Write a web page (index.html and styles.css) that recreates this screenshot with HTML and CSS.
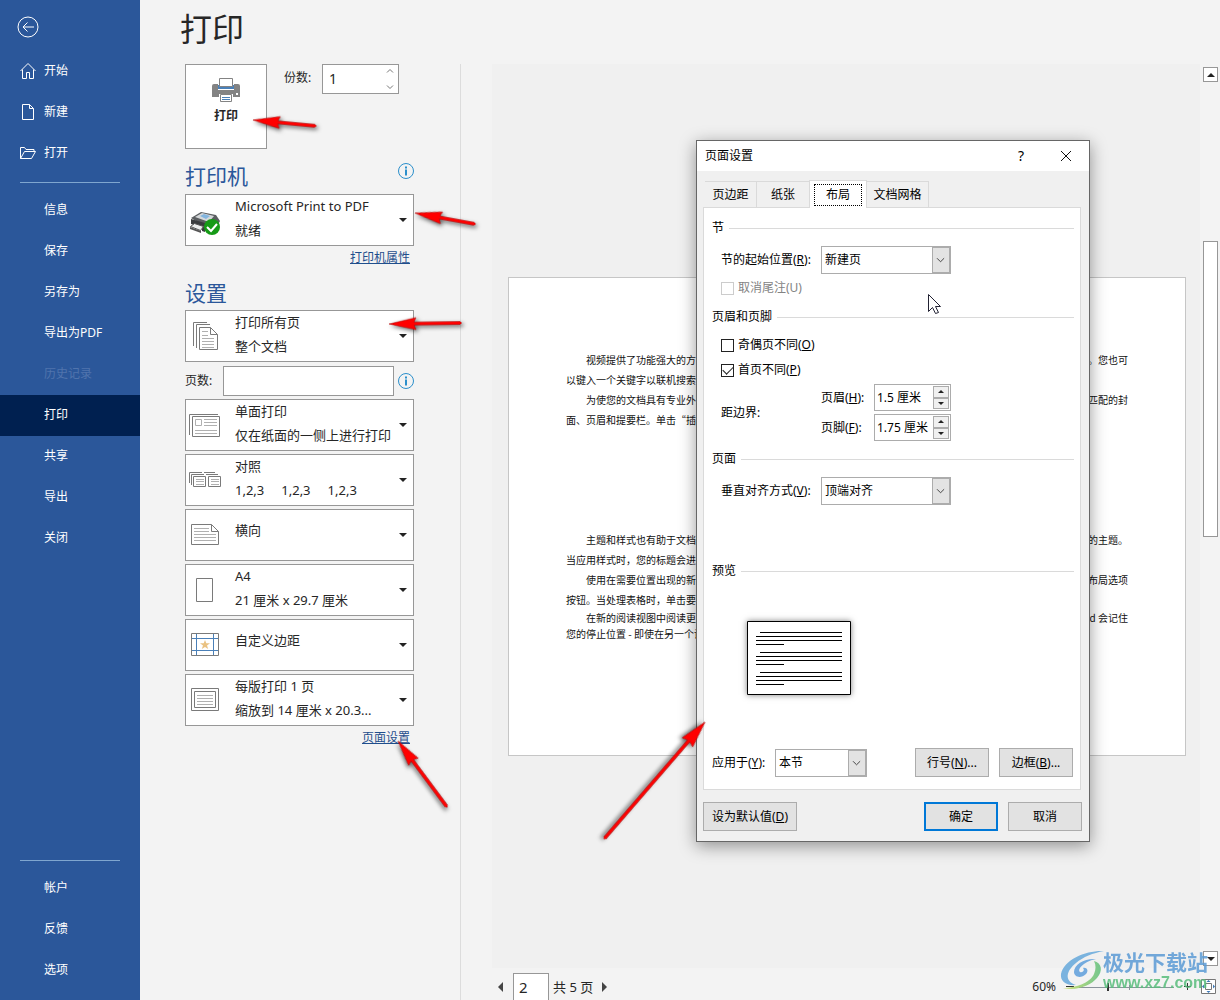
FILE: index.html
```html
<!DOCTYPE html>
<html lang="zh-CN">
<head>
<meta charset="utf-8">
<title>打印</title>
<link rel="stylesheet" href="styles.css">
</head>
<body>
<div class="app">
  <nav class="sidebar">
    <button class="back" aria-label="返回">
      <svg width="22" height="22" viewBox="0 0 22 22"><circle cx="11" cy="11" r="10"/><path d="M17 11H6M10.500 6.500L6 11l4.500 4.500"/></svg>
    </button>
    <a class="nav-item" href="#"><svg width="18" height="18" viewBox="0 0 18 18"><path d="M1.500 9L9 1.500 16.500 9M3.500 7.500v9h4v-6h3v6h4v-9"/></svg>开始</a>
    <a class="nav-item" href="#"><svg width="18" height="18" viewBox="0 0 18 18"><path d="M3.500 1.500h7l4 4v11h-11zM10.500 1.500v4h4"/></svg>新建</a>
    <a class="nav-item" href="#"><svg width="18" height="18" viewBox="0 0 18 18"><path d="M1.500 14.500v-11h4l1.500 2h8v2M1.500 14.500l4-7h11l-4 7z"/></svg>打开</a>
    <hr class="rule">
    <a class="nav-item text" href="#">信息</a>
    <a class="nav-item text" href="#">保存</a>
    <a class="nav-item text" href="#">另存为</a>
    <a class="nav-item text" href="#">导出为PDF</a>
    <a class="nav-item text disabled" aria-disabled="true">历史记录</a>
    <a class="nav-item text active" href="#" aria-current="page">打印</a>
    <a class="nav-item text" href="#">共享</a>
    <a class="nav-item text" href="#">导出</a>
    <a class="nav-item text" href="#">关闭</a>
    <hr class="rule bottom">
    <a class="nav-item text" href="#">帐户</a>
    <a class="nav-item text" href="#">反馈</a>
    <a class="nav-item text" href="#">选项</a>
  </nav>

  <main class="main">
    <h1>打印</h1>
    <div class="columns">
      <section class="settings">
        <div class="print-row">
          <button class="print-button">
            <svg width="28" height="26" viewBox="0 0 28 26"><path fill="#838383" d="M2 7h24q2 0 2 2v11H0V9q0-2 2-2z"/><path fill="#fff" d="M6 6h16v7H6zM7 17h14v9H7z"/><path fill="#4a80b8" d="M6 8h16v4H6z"/><path fill="#fff" stroke="#838383" d="M7.500 1.500h13v8h-13zM8.500 17.500h11v7h-11z"/><path stroke="#4a80b8" d="M10 20.500h8M10 22.500h8"/><path fill="#fff" d="M24 16h2v2h-2z"/></svg>
            <span>打印</span>
          </button>
          <label class="copies-label" for="copies">份数:</label>
          <div class="copies">
            <input id="copies" type="text" value="1">
            <svg width="8" height="22" viewBox="0 0 8 22"><path d="M1 4.500l3-3 3 3M1 17.500l3 3 3-3"/></svg>
          </div>
        </div>

        <div class="heading"><h2>打印机</h2><svg class="info" width="18" height="18" viewBox="0 0 18 18"><circle cx="9" cy="9" r="7.500"/><path d="M9 7.500v6M9 4.500v2"/></svg></div>
        <button class="picker" aria-haspopup="listbox">
          <svg class="icon" width="40" height="50" viewBox="0 0 40 50"><path fill="#5b5e61" d="M5 23l10-6 15 3 4 6-4 8-12-3z"/><path fill="#d5d8da" d="M9 22l7-4 12 3-5 6z"/><path fill="#83b5df" d="M14 21l4-2 6 2-4 3z"/><path fill="#3a3c3e" d="M5 24l14 4v9l-3-1v-4L5 29z"/><path fill="#eceded" stroke="#555" d="M4.500 31.500l4-3 9 3-3 4z"/><path fill="#555" d="M4 32l11 4v2L4 34z"/><circle cx="26" cy="32" r="8" fill="#159a16"/><path fill="none" stroke="#fff" stroke-width="2" d="M21 32l4 4 6-7"/></svg>
          <span class="lines"><span>Microsoft Print to PDF</span><span>就绪</span></span>
          <i class="caret"></i>
        </button>
        <a class="link" href="#">打印机属性</a>

        <div class="heading second"><h2>设置</h2></div>
        <div class="stack">
          <button class="picker" aria-haspopup="listbox">
            <svg class="icon gray" width="40" height="50" viewBox="0 0 40 50"><path d="M7.500 35V11.500H21M10.500 37V13.500H24M13.500 16.500h11l7 7v15h-18zM24.500 16.500v7h7"/><path class="light" d="M16 20.500h6M16 24.500h6M16 27.500h12M16 30.500h12M16 33.500h12M16 36.500h12"/></svg>
            <span class="lines"><span>打印所有页</span><span>整个文档</span></span>
            <i class="caret"></i>
          </button>
          <div class="pages-row">
            <label for="pages">页数:</label>
            <input id="pages" type="text">
            <svg class="info" width="18" height="18" viewBox="0 0 18 18"><circle cx="9" cy="9" r="7.500"/><path d="M9 7.500v6M9 4.500v2"/></svg>
          </div>
          <button class="picker" aria-haspopup="listbox">
            <svg class="icon gray" width="40" height="50" viewBox="0 0 40 50"><path d="M3.500 35V14.500H32M6.500 16.500h27v20h-27z"/><path class="light" d="M9.500 19.500h6v6h-6zM18 19.500h13M18 22.500h13M18 25.500h13M9 30.500h22M9 33.500h22"/></svg>
            <span class="lines"><span>单面打印</span><span>仅在纸面的一侧上进行打印</span></span>
            <i class="caret"></i>
          </button>
          <button class="picker" aria-haspopup="listbox">
            <svg class="icon gray" width="40" height="50" viewBox="0 0 40 50"><path d="M3.500 28V17.500H16M5.500 30V19.500H18M7.500 21.500h12v10h-12zM18 17.500h11M20 19.500h12M22.500 21.500h12v10h-12z"/><path class="light" d="M10 24.500h8M10 26.500h8M10 29.500h8M25 24.500h8M25 26.500h8M25 29.500h8"/></svg>
            <span class="lines"><span>对照</span><span class="sets"><span>1,2,3</span><span>1,2,3</span><span>1,2,3</span></span></span>
            <i class="caret"></i>
          </button>
          <button class="picker" aria-haspopup="listbox">
            <svg class="icon gray" width="40" height="50" viewBox="0 0 40 50"><path d="M5.500 14.500h20l7 7v13h-27zM25.500 14.500v7h7"/><path class="light" d="M8 18.500h15M8 21.500h15M8 24.500h22M8 27.500h22M8 30.500h22"/></svg>
            <span class="lines single"><span>横向</span></span>
            <i class="caret"></i>
          </button>
          <button class="picker" aria-haspopup="listbox">
            <svg class="icon gray" width="40" height="50" viewBox="0 0 40 50"><path d="M10.500 13.500h16v23h-16z"/></svg>
            <span class="lines"><span>A4</span><span>21 厘米 x 29.7 厘米</span></span>
            <i class="caret"></i>
          </button>
          <button class="picker" aria-haspopup="listbox">
            <svg class="icon gray" width="40" height="50" viewBox="0 0 40 50"><path class="blue" d="M10.500 14v22M27.500 14v22M6 18.500h27M6 30.500h27"/><path d="M5.500 13.500h27v22h-27z"/><path class="star" d="M19 20l1.300 3.300h3.700l-3 2.200 1.200 3.500-3.200-2.100-3.200 2.100 1.200-3.500-3-2.200h3.700z"/></svg>
            <span class="lines single"><span>自定义边距</span></span>
            <i class="caret"></i>
          </button>
          <button class="picker" aria-haspopup="listbox">
            <svg class="icon gray" width="40" height="50" viewBox="0 0 40 50"><path d="M5.500 13.500h27v22h-27zM8.500 16.500h21v16h-21z"/><path class="light" d="M11 20.500h16M11 23.500h16M11 26.500h16M11 29.500h16"/></svg>
            <span class="lines"><span>每版打印 1 页</span><span>缩放到 14 厘米 x 20.3...</span></span>
            <i class="caret"></i>
          </button>
        </div>
        <a class="link" href="#">页面设置</a>
      </section>

      <section class="preview">
        <div class="canvas">
          <article class="paper">
            <p class="first"><span>视频提供了功能强大的方法</span><span>。您也可</span></p>
            <p><span>以键入一个关键字以联机搜索最</span></p>
            <p class="first"><span>为使您的文档具有专业外观</span><span>匹配的封</span></p>
            <p><span>面、页眉和提要栏。单击“插入</span></p>
            <p class="first later"><span>主题和样式也有助于文档保</span><span>的主题。</span></p>
            <p><span>当应用样式时，您的标题会进行</span></p>
            <p class="first"><span>使用在需要位置出现的新按</span><span>布局选项</span></p>
            <p><span>按钮。当处理表格时，单击要添</span></p>
            <p class="first tight"><span>在新的阅读视图中阅读更加</span><span>d 会记住</span></p>
            <p class="tight"><span>您的停止位置 - 即使在另一个设</span></p>
          </article>
        </div>
        <div class="scrollbar">
          <button aria-label="向上滚动"><i class="tri up"></i></button>
          <div class="track"><div class="thumb"></div></div>
          <button aria-label="向下滚动"><i class="tri down"></i></button>
        </div>
        <footer class="status">
          <button class="plain" aria-label="上一页"><i class="tri left"></i></button>
          <input class="page-number" type="text" value="2" aria-label="当前页">
          <span>共 5 页</span>
          <button class="plain" aria-label="下一页"><i class="tri right"></i></button>
          <span class="percent">60%</span>
          <svg class="zoom" width="125" height="16" viewBox="0 0 125 16"><path stroke="#8a929b" d="M13 8.500h95M63.500 6v5"/><path stroke="#333" d="M0 7.500h8M118 7.500h7M121.500 4v7"/><path fill="#333" d="M41 4h2v8h-2z"/></svg>
          <button class="fit" aria-label="缩放到页面"><svg width="15" height="15" viewBox="0 0 15 15"><path fill="none" stroke="#777" d="M.5.5h14v14H.5zM4.500 4.500h6v6h-6z"/><path fill="#3c77b5" d="M7.500 1l2 2h-4zM7.500 14l2-2h-4zM1 7.500l2-2v4zM14 7.500l-2-2v4z"/></svg></button>
        </footer>
      </section>
    </div>
  </main>

  <div class="watermark">
    <svg width="46" height="42" viewBox="0 0 46 42">
      <defs><linearGradient id="swirl" x1="0" y1="0" x2="1" y2="0"><stop offset="0" stop-color="#c9dd61"/><stop offset="1" stop-color="#5fbf7c"/></linearGradient></defs>
      <path fill="#66a9dc" d="M44 1C27 0 4 9 1 24c-1 7 5 12 15 11C4 31 6 21 16 13 23 7 33 3 44 1z"/>
      <path fill="#5f9fdc" d="M36 9C25 8 14 14 14 22c0 5 7 7 12 2 3-3 1-7-3-6 2 2 0 5-3 4-3-2 2-10 16-13z"/>
      <path fill="url(#swirl)" d="M34 11c8 2 9 10 3 17C30 36 17 41 3 38c12 0 27-5 31-14 2-5 2-9 0-13z"/>
    </svg>
    <div class="mark-text"><strong>极光下载站</strong><span>www.xz7.com</span></div>
  </div>

  <form class="dialog" role="dialog" aria-labelledby="dialog-title">
    <header class="titlebar">
      <h2 id="dialog-title">页面设置</h2>
      <button type="button" class="help" aria-label="帮助">?</button>
      <button type="button" class="close" aria-label="关闭"><svg width="12" height="12" viewBox="0 0 12 12"><path d="M1 1l10 10M11 1L1 11"/></svg></button>
    </header>
    <div class="tabs" role="tablist">
      <button type="button" role="tab">页边距</button>
      <button type="button" role="tab">纸张</button>
      <button type="button" role="tab" class="selected" aria-selected="true"><span>布局</span></button>
      <button type="button" role="tab">文档网格</button>
    </div>
    <div class="panel">
      <h3>节</h3>
      <div class="field">
        <label for="start">节的起始位置(<u>R</u>):</label>
        <span class="combo"><select id="start"><option>新建页</option></select><svg width="18" height="26" viewBox="0 0 18 26"><path d="M4.500 11l4 4 4-4"/></svg></span>
      </div>
      <label class="check off"><input type="checkbox" disabled>取消尾注(U)</label>
      <h3 class="headers">页眉和页脚</h3>
      <label class="check"><input type="checkbox">奇偶页不同(<u>O</u>)</label>
      <label class="check next"><input type="checkbox" checked>首页不同(<u>P</u>)</label>
      <div class="distances">
        <span class="edge">距边界:</span>
        <label for="head">页眉(<u>H</u>):</label>
        <span class="spin"><input id="head" type="text" value="1.5 厘米"><span class="steps"><button type="button" aria-label="增加"><i class="tri up"></i></button><button type="button" aria-label="减少"><i class="tri down"></i></button></span></span>
        <label for="foot">页脚(<u>F</u>):</label>
        <span class="spin"><input id="foot" type="text" value="1.75 厘米"><span class="steps"><button type="button" aria-label="增加"><i class="tri up"></i></button><button type="button" aria-label="减少"><i class="tri down"></i></button></span></span>
      </div>
      <h3>页面</h3>
      <div class="field">
        <label for="align">垂直对齐方式(<u>V</u>):</label>
        <span class="combo"><select id="align"><option>顶端对齐</option></select><svg width="18" height="26" viewBox="0 0 18 26"><path d="M4.500 11l4 4 4-4"/></svg></span>
      </div>
      <h3 class="sample-head">预览</h3>
      <svg class="sample" width="104" height="74" viewBox="0 0 104 74"><path fill="#fff" stroke="#000" d="M.5.5h103v73H.5z"/><path stroke="#000" d="M13 11.500h82M9 15.500h86M9 19.500h86M9 23.500h28M13 31.500h82M9 35.500h86M9 39.500h86M9 43.500h28M13 51.500h82M9 55.500h86M9 59.500h86M9 63.500h28"/></svg>
      <div class="apply">
        <label for="apply">应用于(<u>Y</u>):</label>
        <span class="combo short"><select id="apply"><option>本节</option></select><svg width="18" height="26" viewBox="0 0 18 26"><path d="M4.500 11l4 4 4-4"/></svg></span>
        <button type="button" class="btn push">行号(<u>N</u>)...</button>
        <button type="button" class="btn">边框(<u>B</u>)...</button>
      </div>
    </div>
    <div class="actions">
      <button type="button" class="btn wide">设为默认值(<u>D</u>)</button>
      <button type="submit" class="btn primary push">确定</button>
      <button type="button" class="btn">取消</button>
    </div>
  </form>

  <svg class="marks" width="1220" height="1000" viewBox="0 0 1220 1000" aria-hidden="true">
    <g transform="translate(253 120) rotate(5.400)"><path d="M0 0L27-6 25-1.500 62-1.500Q65 0 62 1.500L25 1.500 27 6z"/></g>
    <g transform="translate(415 213) rotate(10.400)"><path d="M0 0L27-6 25-1.500 60-1.500Q63 0 60 1.500L25 1.500 27 6z"/></g>
    <g transform="translate(389 324) rotate(-0.800)"><path d="M0 0L27-6 25-1.500 71-1.500Q74 0 71 1.500L25 1.500 27 6z"/></g>
    <g transform="translate(398 741) rotate(53.400)"><path d="M0 0L26-6 24-1.500 81-1.500Q84 0 81 1.500L24 1.500 26 6z"/></g>
    <g transform="translate(705 722) rotate(130.800)"><path d="M0 0L27-7 25-1.500 153-1.500Q156 0 153 1.500L25 1.500 27 7z"/></g>
    <path class="pointer" d="M928.500 294.500v17l4-4 3 6 3-1-3-6h5z"/>
  </svg>
</div>
</body>
</html>
```
FILE: styles.css
```css
* { box-sizing: border-box; }

body {
  margin: 0;
  background: #f3f3f3;
  color: #262626;
  font: 12px/20px "Noto Sans", "Noto Sans CJK SC", sans-serif;
}

button, input, select { font: inherit; color: inherit; margin: 0; border-radius: 0; }
button { padding: 0; }
h1, h2, h3, p { margin: 0; font-weight: 400; }
svg { display: block; flex: none; }

.app { position: relative; display: flex; min-height: 100vh; overflow: hidden; }

/* Sidebar */
.sidebar {
  display: flex;
  flex-direction: column;
  flex: none;
  width: 140px;
  padding-bottom: 9px;
  background: #2b579a;
  color: #fff;
}
.sidebar svg { fill: none; stroke: #fff; }
.back { align-self: flex-start; margin: 16px 0 12px 17px; border: 0; background: none; }
.nav-item {
  display: flex;
  align-items: center;
  gap: 7px;
  height: 41px;
  padding-left: 19px;
  color: #fff;
  text-decoration: none;
}
.nav-item.text { padding: 0 0 2px 44px; }
.nav-item.disabled { color: #5074ad; }
.nav-item.active { background: #002050; }
.rule { width: 100px; height: 1px; margin: 9px 20px 7px; border: 0; background: #7fa6cf; }
.rule.bottom { margin: auto 20px 7px; }

/* Settings column */
.main { display: flex; flex: 1; flex-direction: column; min-width: 0; }
h1 { height: 64px; padding-left: 40px; font-size: 32px; line-height: 58px; }
.columns { display: flex; flex: 1; }
.settings {
  display: flex;
  flex: none;
  flex-direction: column;
  width: 321px;
  padding-left: 45px;
  padding-right: 46px;
  border-right: 1px solid #dcdcdc;
}
.print-row { display: flex; align-items: flex-start; }
.print-button {
  display: flex;
  flex-direction: column;
  align-items: center;
  gap: 3px;
  width: 82px;
  height: 85px;
  padding-top: 12px;
  border: 1px solid #979797;
  background: #fff;
  font-weight: 700;
  fill: none;
}
.copies-label { width: 55px; padding: 4px 0 0 17px; white-space: nowrap; }
.copies {
  display: flex;
  align-items: center;
  width: 77px;
  height: 30px;
  padding-right: 4px;
  border: 1px solid #979797;
  background: #fff;
}
.copies input { flex: 1; min-width: 0; padding: 0 6px; border: 0; background: none; font-size: 14px; }
.copies svg { fill: none; stroke: #777; }
.heading { display: flex; justify-content: space-between; height: 45px; padding-top: 12px; }
.heading.second { height: 42px; padding-top: 10px; }
h2 { color: #2b579a; font-size: 21px; line-height: 30px; }
.info { margin-top: 1px; margin-right: -1px; fill: none; stroke: #2b8fcb; stroke-width: 2; }
.info circle { stroke-width: 1; }
.picker {
  display: flex;
  width: 229px;
  height: 52px;
  border: 1px solid #979797;
  background: #fff;
  text-align: left;
  font-size: 13px;
  line-height: 24px;
}
.icon { margin-right: 9px; }
.gray { fill: none; stroke: #7a7a7a; }
.gray .light { stroke: #b0b0b0; }
.gray .blue { stroke: #4a80b8; }
.gray .star { fill: #eac282; stroke: none; }
.lines { display: flex; flex: 1; flex-direction: column; min-width: 0; margin-top: -1px; white-space: nowrap; }
.lines.single { padding-top: 9px; }
.sets { display: flex; gap: 17px; }
.caret {
  align-self: center;
  margin-right: 6px;
  border: 4px solid transparent;
  border-top-color: #222;
  border-bottom: 0;
}
.link { align-self: flex-end; margin-right: 4px; color: #1f4e8c; line-height: 20px; margin-top: 2px; }
.stack { display: flex; flex-direction: column; gap: 3px; }
.pages-row { display: flex; align-items: center; height: 31px; }
.pages-row label { width: 38px; white-space: nowrap; }
.pages-row input { width: 171px; height: 30px; border: 1px solid #979797; background: #fff; }
.pages-row .info { margin: 0 0 0 3px; }
.pages-row label { flex: none; }

/* Preview */
.preview {
  display: grid;
  flex: 1;
  grid-template: 1fr 32px / 1fr 20px;
  min-width: 0;
  padding-left: 31px;
}
.canvas { display: flex; align-items: center; padding: 0 14px 0 16px; background: #f0f0f0; }
.paper {
  width: 100%;
  aspect-ratio: 678 / 479;
  padding: 72px 57px 0;
  border: 1px solid #c6c6c6;
  background: #fff;
  color: #111;
  font: 10px/20px "Noto Sans CJK SC", sans-serif;
}
.paper p { display: flex; justify-content: space-between; white-space: nowrap; }
.paper .first { padding-left: 20px; }
.paper .later { margin-top: 100px; }
.paper .tight { line-height: 16px; }
.scrollbar { display: flex; flex-direction: column; padding: 3px 2px 2px 3px; }
.scrollbar button { display: grid; place-items: center; height: 15px; border: 1px solid #979797; background: #fff; }
.track { display: flex; flex: 1; flex-direction: column; padding: 159px 0 414px; }
.thumb { flex: 1; border: 1px solid #979797; background: #fff; }
.tri { border: 4px solid transparent; }
.tri.up { border-bottom-color: #222; border-top: 0; }
.tri.down { border-top-color: #222; border-bottom: 0; }
.tri.left { border-width: 5px; border-right-color: #444; border-left: 0; }
.tri.right { border-width: 5px; border-left-color: #444; border-right: 0; }
.status { grid-column: 1 / 3; display: flex; align-items: center; padding: 5px 4px 0 6px; font-size: 13px; }
.plain { display: flex; border: 0; background: none; }
.page-number {
  width: 36px;
  height: 27px;
  margin: 0 4px 0 10px;
  padding: 0 5px;
  border: 1px solid #979797;
  border-bottom: 0;
  background: #fff;
  font-size: 15px;
}
.status .plain:nth-of-type(2) { margin-left: 9px; }
.percent { margin-left: auto; font-size: 12px; }
.zoom { margin: 0 10px; fill: none; }
.fit { border: 0; background: #fff; }

/* Watermark */
.watermark { position: absolute; right: 12px; bottom: 8px; display: flex; opacity: 0.85; }
.mark-text { display: flex; flex-direction: column; width: 105px; margin-left: -3px; white-space: nowrap; }
.mark-text strong { color: #5b9bd5; font-size: 21px; line-height: 24px; }
.mark-text span { color: #58bd7c; font: 700 16px/18px "Liberation Sans", sans-serif; }

/* Page setup dialog */
.dialog {
  position: absolute;
  top: 140px;
  left: 696px;
  width: 394px;
  border: 1px solid #666;
  background: #f0f0f0;
  box-shadow: 0 4px 16px rgba(0, 0, 0, 0.4);
  color: #000;
}
.titlebar { display: flex; align-items: center; height: 30px; padding: 0 17px 0 8px; background: #fff; }
.titlebar h2 { flex: 1; color: #000; font-size: 12px; line-height: 20px; }
.titlebar button { border: 0; background: none; }
.help { margin-right: 36px; font-size: 14px; }
.close svg { fill: none; stroke: #111; }
.tabs { display: flex; align-items: flex-end; height: 36px; padding-left: 8px; }
.tabs button { height: 26px; border: 1px solid #dadada; border-width: 1px 1px 0 0; background: none; }
.tabs button:nth-child(1) { width: 52px; }
.tabs button:nth-child(2) { width: 52px; border-right: 0; }
.tabs button:nth-child(4) { width: 62px; }
.tabs .selected {
  position: relative;
  z-index: 1;
  width: 58px;
  height: 28px;
  margin-bottom: -1px;
  padding: 3px 4px 2px;
  border-left-width: 1px;
  background: #fff;
}
.selected span { display: block; border: 1px dotted #000; }
.panel { margin: 0 8px 0 6px; padding: 10px 6px 12px 8px; border: 1px solid #dadada; background: #fff; }
h3 { display: flex; align-items: center; gap: 5px; margin-bottom: 8px; font-size: 12px; line-height: 20px; }
h3::after { flex: 1; height: 1px; background: #dadada; content: ""; }
h3.headers { margin-top: 9px; }
.field { display: flex; align-items: center; padding-left: 9px; }
.field label { width: 100px; white-space: nowrap; }
.combo { display: grid; width: 130px; height: 28px; border: 1px solid #acacac; background: #fff; }
.combo.short { width: 92px; }
.combo select, .combo svg { grid-area: 1 / 1; }
.combo select { appearance: none; width: 100%; padding: 0 20px 0 3px; border: 0; background: none; }
.combo svg { justify-self: end; border: 1px solid #acacac; background: #e3e3e3; fill: none; stroke: #333; pointer-events: none; }
.check { display: flex; align-items: center; height: 20px; padding-left: 9px; }
.check input {
  appearance: none;
  display: grid;
  place-items: center;
  width: 13px;
  height: 13px;
  margin-right: 4px;
  border: 1px solid #222;
  background: #fff;
}
.check input:checked::after {
  width: 9px;
  height: 5px;
  border: 1px solid #222;
  border-width: 0 0 1px 1px;
  transform: translateY(-1px) rotate(-45deg);
  content: "";
}
.check.off { margin-top: 4px; color: #838383; }
.check.off input { border-color: #ccc; }
.check.next { margin-top: 5px; }
.distances {
  display: grid;
  grid-template: 27px 27px / 100px 53px 77px;
  align-items: center;
  row-gap: 3px;
  margin: 4px 0 8px;
  padding-left: 9px;
}
.edge { grid-row: 1 / 3; }
.spin { display: flex; height: 27px; padding: 1px; border: 1px solid #acacac; background: #fff; }
.spin input { flex: 1; width: 57px; min-width: 0; padding: 0 0 0 1px; border: 0; background: none; }
.steps { display: flex; flex: none; flex-direction: column; width: 16px; }
.steps button { display: grid; flex: 1; place-items: center; border: 1px solid #acacac; background: #f0f0f0; }
.steps .tri { border-width: 3px; }
.steps .up { border-top: 0; }
.steps .down { border-bottom: 0; }
h3.sample-head { margin: 56px 0 40px; }
.sample { margin-left: 35px; fill: none; box-shadow: 0 0 6px rgba(0, 0, 0, 0.5); }
.apply { display: flex; align-items: center; height: 29px; margin-top: 53px; padding-right: 1px; }
.apply label { width: 63px; white-space: nowrap; }
.btn { width: 74px; height: 29px; border: 1px solid #acacac; background: #e2e2e2; }
.btn + .btn { margin-left: 10px; }
.btn.push { margin-left: auto; }
.btn.primary { border: 2px solid #0078d7; }
.btn.wide { width: 94px; }
.actions { display: flex; padding: 12px 7px 10px 6px; }

/* Callout arrows */
.marks { position: absolute; top: 0; left: 0; pointer-events: none; }
.marks g { fill: #f00; stroke: #a00; stroke-width: 0.500; filter: drop-shadow(2px 2px 2px rgba(0, 0, 0, 0.6)); }
.pointer { fill: #fff; stroke: #223; }
```
